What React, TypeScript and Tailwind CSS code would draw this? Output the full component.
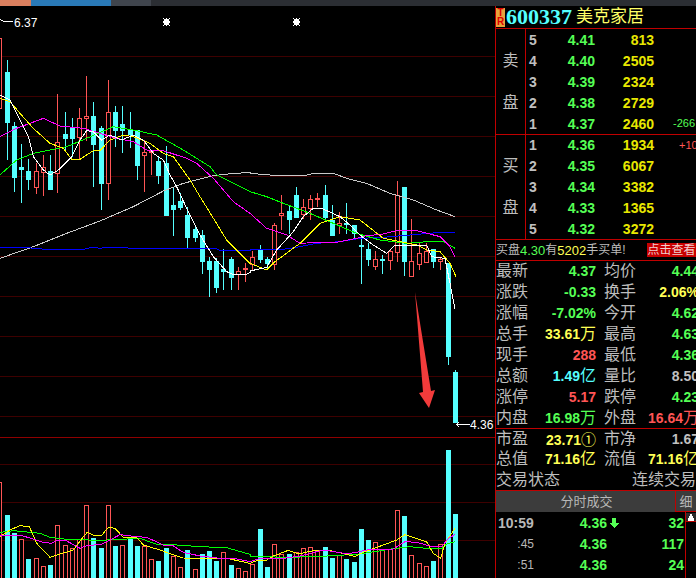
import type { ReactNode } from 'react';

const RED = '#ff5555';
const CYAN = '#55ffff';

// x, type (r 阳线 / c 阴线), body top, body bottom, wick top, wick bottom, volume top
type Bar = [number, 'r' | 'c', number, number, number, number, number, ('r' | 'c')?];

const bars: Bar[] = [
  [-1, 'r', 38, 108, 38, 108, 482],
  [7.5, 'c', 72, 123, 60, 160, 515],
  [14.5, 'c', 126, 178, 122, 192, 533],
  [21.5, 'c', 167, 170, 144, 203, 539, 'r'],
  [28.5, 'c', 171, 180, 159, 190, 559],
  [36, 'r', 171, 187, 163, 194, 558],
  [43.5, 'r', 167, 172, 155, 196, 566],
  [50.5, 'c', 171, 190, 155, 190, 565],
  [57.5, 'r', 142, 173, 94, 193, 525],
  [65, 'c', 134, 139, 112, 150, 545, 'r'],
  [72.5, 'c', 128, 139, 118, 157, 548, 'r'],
  [79.5, 'r', 118, 137, 108, 159, 539],
  [86.5, 'r', 116, 118, 76, 141, 505],
  [93.5, 'c', 116, 145, 102, 187, 538],
  [101.5, 'c', 128, 184, 126, 210, 548],
  [108.5, 'r', 112, 183, 80, 200, 505],
  [115.5, 'c', 112, 131, 106, 147, 546],
  [122.5, 'c', 124, 131, 106, 153, 545, 'r'],
  [130.5, 'c', 129, 135, 112, 148, 539],
  [137.5, 'c', 130, 166, 130, 180, 546],
  [144.5, 'r', 152, 155, 140, 192, 546],
  [151.5, 'r', 151, 151, 151, 175, 559],
  [158.5, 'c', 161, 176, 157, 184, 561],
  [166, 'c', 163, 216, 146, 216, 548],
  [173.5, 'c', 205, 210, 188, 236, 556, 'r'],
  [180.5, 'c', 201, 208, 193, 210, 567, 'r'],
  [187.5, 'c', 215, 238, 207, 248, 550],
  [195.5, 'c', 229, 238, 227, 242, 569, 'r'],
  [202.5, 'c', 235, 262, 230, 274, 554],
  [209.5, 'c', 261, 270, 257, 297, 551],
  [216.5, 'c', 261, 288, 258, 293, 561],
  [223.5, 'c', 269, 272, 249, 290, 552, 'r'],
  [231.5, 'c', 259, 278, 257, 290, 565],
  [238.5, 'r', 271, 274, 267, 290, 568],
  [245.5, 'r', 268, 268, 263, 282, 571],
  [252.5, 'r', 257, 264, 251, 270, 564],
  [260.5, 'c', 250, 260, 245, 263, 529],
  [267.5, 'c', 259, 264, 257, 270, 567],
  [274.5, 'r', 225, 264, 223, 270, 544],
  [281.5, 'r', 213, 215, 195, 230, 554],
  [289, 'c', 211, 220, 205, 234, 554],
  [296.5, 'c', 195, 218, 187, 218, 552, 'r'],
  [303.5, 'r', 207, 214, 199, 219, 548],
  [310.5, 'r', 199, 208, 195, 220, 547],
  [317.5, 'r', 198, 198, 193, 207, 550],
  [325.5, 'c', 195, 218, 185, 222, 547],
  [332.5, 'c', 220, 236, 205, 236, 558],
  [339.5, 'r', 223, 225, 212, 234, 555],
  [346.5, 'c', 223, 224, 203, 234, 559],
  [354.5, 'c', 225, 234, 225, 239, 562],
  [361.5, 'c', 245, 245, 235, 284, 529],
  [368.5, 'c', 249, 260, 243, 266, 540],
  [375.5, 'r', 259, 266, 251, 270, 542],
  [382.5, 'c', 259, 259, 255, 274, 549, 'r'],
  [390.5, 'r', 251, 260, 249, 270, 549],
  [397.5, 'r', 195, 252, 181, 262, 510],
  [404.5, 'c', 187, 262, 187, 276, 516],
  [411.5, 'r', 261, 276, 219, 276, 555],
  [419.5, 'r', 253, 264, 243, 270, 563],
  [426.5, 'r', 251, 262, 243, 262, 566],
  [433.5, 'c', 249, 262, 249, 268, 561],
  [440.5, 'r', 259, 261, 257, 270, 544],
  [448.5, 'c', 263, 357, 263, 365, 450],
  [455.5, 'c', 372, 423, 370, 423, 514],
];

// 折线点按截图放大 3 倍后的坐标记录，这里换算回页面坐标
function seg(ox: number, oy: number, pts: number[][]) {
  return pts.map(([x, y]) => `${ox + x / 3},${oy + y / 3}`).join(' ');
}

const priceLines: [string, string][] = [
  ['#c8c8c8', seg(0, 160, [[0, 295], [100, 260], [200, 220], [300, 183], [400, 140], [490, 93], [550, 70], [640, 47], [700, 40], [750, 38]]) + ' ' + seg(250, 160, [[0, 40], [60, 45], [170, 45], [190, 40], [250, 40], [290, 55], [350, 70], [420, 100], [490, 120], [560, 150], [615, 170]])],
  ['#0000ff', seg(0, 160, [[0, 262], [80, 262], [100, 265], [140, 268], [250, 268], [270, 263], [290, 263], [300, 265], [315, 262], [380, 262], [385, 265], [650, 266], [660, 271], [750, 271]]) + ' ' + seg(250, 160, [[0, 270], [100, 268], [150, 260], [200, 250], [270, 245], [330, 235], [400, 232], [480, 225], [560, 218], [615, 218]])],
  ['#00ff00', seg(0, 0, [[0, 525], [50, 480], [100, 460], [200, 440], [260, 415], [340, 380], [400, 390], [470, 405], [550, 450], [630, 500], [650, 525], [700, 550], [750, 575]]) + ' ' + seg(250, 160, [[0, 95], [50, 110], [100, 130], [180, 160], [250, 190], [320, 220], [390, 240], [470, 250], [530, 245], [580, 245], [615, 265]])],
  ['#ff00ff', seg(0, 0, [[0, 410], [50, 385], [130, 355], [180, 378], [250, 385], [300, 400], [350, 415], [400, 425], [440, 450], [490, 452], [560, 475], [590, 490], [640, 535], [700, 605], [750, 640]]) + ' ' + seg(250, 160, [[0, 160], [50, 205], [110, 225], [150, 250], [210, 247], [260, 247], [320, 235], [345, 228], [400, 222], [440, 212], [500, 212], [570, 230], [600, 260], [615, 290]])],
  ['#ffff00', seg(0, 0, [[0, 295], [30, 305], [60, 340], [100, 385], [150, 430], [190, 445], [215, 478], [240, 478], [280, 452], [300, 452], [330, 420], [370, 405], [400, 410], [450, 430], [490, 460], [520, 470], [570, 540], [600, 590], [625, 630]]) + ' ' + seg(0, 160, [[680, 240], [750, 310]]) + ' ' + seg(250, 160, [[0, 310], [50, 330], [75, 305], [150, 250], [210, 190], [270, 170], [330, 180], [400, 235], [450, 245], [500, 255], [530, 270], [570, 275], [600, 310], [618, 350]])],
  ['#ffffff', seg(0, 0, [[0, 285], [30, 300], [50, 340], [85, 410], [100, 470], [130, 510], [150, 525], [175, 510], [215, 470], [240, 420], [260, 392], [280, 395], [305, 420], [330, 405], [365, 420], [400, 405], [430, 420], [460, 460], [490, 480]]) + ' ' + seg(0, 160, [[510, 45], [530, 80], [560, 145], [600, 225], [640, 290], [680, 335], [700, 344], [735, 344], [750, 338]]) + ' ' + seg(250, 160, [[0, 333], [50, 322], [80, 270], [130, 215], [160, 170], [190, 145], [215, 145], [270, 170], [300, 195], [330, 225], [370, 255], [410, 280], [435, 255], [530, 255], [545, 290], [585, 295], [600, 370], [615, 448]])],
];

const volumeLines: [string, string][] = [
  ['#00ff00', seg(0, 430, [[0, 307], [40, 302], [120, 310], [150, 322], [200, 328], [300, 331], [420, 325], [470, 343], [530, 345], [600, 350], [680, 353], [750, 373]]) + ' ' + seg(250, 430, [[0, 378], [100, 382], [200, 380], [330, 372], [430, 356], [480, 350], [530, 355], [575, 356], [590, 342], [615, 335]])],
  ['#ffff00', seg(0, 430, [[0, 320], [30, 300], [60, 287], [88, 290], [110, 340], [150, 382], [180, 372], [220, 360], [250, 320], [262, 307], [280, 316], [305, 316], [325, 292], [345, 295], [370, 322], [410, 322], [430, 345], [480, 360], [530, 378], [550, 384], [600, 385], [680, 385], [750, 400]]) + ' ' + seg(250, 430, [[20, 392], [50, 390], [70, 378], [115, 361], [145, 372], [190, 362], [240, 362], [290, 373], [315, 380], [345, 365], [400, 345], [440, 330], [465, 314], [530, 336], [550, 370], [572, 385], [585, 340], [615, 295]])],
  ['#ff00ff', seg(0, 430, [[0, 315], [70, 318], [130, 337], [155, 340], [175, 330], [195, 330], [240, 355], [260, 347], [305, 343], [360, 314], [410, 320], [440, 322], [490, 345], [520, 348], [550, 367], [600, 378], [660, 385], [700, 385], [750, 395]]) + ' ' + seg(250, 430, [[30, 385], [100, 385], [150, 378], [220, 360], [290, 371], [320, 367], [350, 360], [430, 357], [465, 335], [500, 337], [540, 348], [575, 350], [595, 325], [615, 314]])],
];

const gridLines = [56, 96, 136, 176, 216, 256, 296, 336, 376, 416, 464, 502, 540];

function Star({ x }: { x: number }) {
  return (
    <g fill="#ffffff">
      <rect x={x - 2} y={19} width={5} height={6} />
      <rect x={x - 3} y={18} width={1} height={1} />
      <rect x={x + 3} y={18} width={1} height={1} />
      <rect x={x - 3} y={25} width={1} height={1} />
      <rect x={x + 3} y={25} width={1} height={1} />
      <rect x={x} y={18} width={1} height={8} />
      <rect x={x - 3} y={21} width={7} height={2} />
    </g>
  );
}

function Chart() {
  return (
    <svg width={495} height={572} viewBox="0 6 495 572" className="block shrink-0" shapeRendering="crispEdges">
      {gridLines.map((y) => (
        <line key={y} x1={0} x2={495} y1={y + 0.5} y2={y + 0.5} stroke="#3e0000" />
      ))}
      <line x1={0} x2={495} y1={437.5} y2={437.5} stroke="#8f0000" />
      <Star x={166} />
      <Star x={296} />

      {/* K线 */}
      {bars.map(([rawX, type, top, bottom, wickTop, wickBottom], i) => {
        const x = Math.floor(rawX) + 0.5;
        const color = type === 'r' ? RED : CYAN;
        return (
          <g key={i}>
            <line x1={x} x2={x} y1={wickTop} y2={wickBottom} stroke={color} />
            {type === 'r' ? (
              <rect x={x - 2} y={top + 0.5} width={4} height={Math.max(bottom - top, 1)} fill="#000000" stroke={color} />
            ) : (
              <rect x={x - 2.5} y={top} width={5} height={Math.max(bottom - top, 2)} fill={color} />
            )}
          </g>
        );
      })}

      {priceLines.map(([color, points]) => (
        <polyline key={color} points={points} fill="none" stroke={color} strokeWidth={1} />
      ))}

      <polygon points="415,292 423,392 419,393 429,408 435,390 431,391" fill="#f23b3b" shapeRendering="auto" />

      {/* 最高最低价标注 */}
      <path d="M0 19.5h1M1 20.5h2M3 21.5h10" stroke="#ffffff" fill="none" />
      <text x={14} y={27} fill="#ffffff" fontSize={12} fontFamily="'Liberation Sans', sans-serif">6.37</text>
      <path d="M456 424.5h14M457 423.5h1M457 425.5h1M458 422.5h1M458 426.5h1" stroke="#ffffff" fill="none" />
      <text x={470} y={429} fill="#ffffff" fontSize={12} fontFamily="'Liberation Sans', sans-serif">4.36</text>

      {/* 成交量 */}
      {bars.map(([rawX, type, , , , , volTop, volType], i) => {
        const x = Math.floor(rawX) + 0.5;
        return (volType ?? type) === 'r' ? (
          <rect key={i} x={x - 2} y={volTop + 0.5} width={4} height={578 - volTop} fill="#000000" stroke={RED} />
        ) : (
          <rect key={i} x={x - 2.5} y={volTop} width={5} height={578 - volTop} fill={CYAN} />
        );
      })}
      {volumeLines.map(([color, points]) => (
        <polyline key={color} points={points} fill="none" stroke={color} strokeWidth={1} />
      ))}
    </svg>
  );
}

function QuoteRows({ rows }: { rows: [string, string, string, ReactNode?][] }) {
  return (
    <div className="flex-1 flex flex-col">
      {rows.map(([no, price, vol, extra]) => (
        <div key={no} className="flex-1 flex items-center font-bold text-[14px] whitespace-nowrap">
          <span className="w-[14px] pl-[3px] text-[#c0c0c0]">{no}</span>
          <span className="w-[55px] text-right text-[#55ff55]">{price}</span>
          <span className="w-[59px] text-right text-[#e8e800]">{vol}</span>
          {extra}
        </div>
      ))}
    </div>
  );
}

function SideLabel({ text }: { text: string }) {
  return (
    <div className="w-[30px] shrink-0 border-r border-[#c00000] flex flex-col items-center justify-center gap-[26px] text-[16px] leading-none text-[#bdbdbd]">
      <span>{text}</span>
      <span>盘</span>
    </div>
  );
}

function Stat({ label, value, color, label2, value2, color2 }: { label: string; value: ReactNode; color: string; label2: string; value2: ReactNode; color2: string }) {
  return (
    <div className="flex-1 flex items-center whitespace-nowrap">
      <span className="w-[32px] shrink-0 text-[16px] text-[#bdbdbd]">{label}</span>
      <span className={`w-[68px] shrink-0 text-right text-[14px] font-bold ${color}`}>{value}</span>
      <span className="w-[32px] ml-[8px] shrink-0 text-[16px] text-[#bdbdbd]">{label2}</span>
      <span className={`w-[63px] shrink-0 text-right text-[14px] font-bold ${color2}`}>{value2}</span>
    </div>
  );
}

const Wan = () => <span className="font-normal text-[16px]">万</span>;
const Yi = () => <span className="font-normal text-[16px]">亿</span>;

function Panel() {
  return (
    <div className="w-[201px] h-[572px] shrink-0 border-l border-[#c00000] overflow-hidden flex flex-col leading-none">
      {/* 标题 */}
      <div className="h-[23px] shrink-0 border-b border-[#c00000] flex items-center">
        <div className="w-[9px] h-[19px] bg-[#e8a33c] flex flex-col items-center justify-center text-[#e00000] text-[10px] leading-[9px] font-bold">
          <span>T</span>
          <span>R</span>
        </div>
        <span className="ml-[1px] font-['Liberation_Serif',serif] font-bold text-[22px] leading-[20px] text-[#55ffff]">600337</span>
        <span className="ml-[4px] text-[17px] leading-[20px] text-[#ffff66]">美克家居</span>
      </div>

      {/* 卖盘 */}
      <div className="h-[106px] shrink-0 border-b border-[#c00000] flex">
        <SideLabel text="卖" />
        <QuoteRows
          rows={[
            ['5', '4.41', '813'],
            ['4', '4.40', '2505'],
            ['3', '4.39', '2324'],
            ['2', '4.38', '2729'],
            ['1', '4.37', '2460', <span className="ml-[19px] text-[11px] font-normal text-[#55ff55]">-266</span>],
          ]}
        />
      </div>

      {/* 买盘 */}
      <div className="h-[105px] shrink-0 border-b border-[#c00000] flex">
        <SideLabel text="买" />
        <QuoteRows
          rows={[
            ['1', '4.36', '1934', <span className="ml-[25px] text-[11px] font-normal text-[#ff5555]">+10</span>],
            ['2', '4.35', '6067'],
            ['3', '4.34', '3382'],
            ['4', '4.33', '1365'],
            ['5', '4.32', '3272'],
          ]}
        />
      </div>

      {/* 大单提示 */}
      <div className="h-[21px] shrink-0 border-b border-[#c00000] flex items-center text-[12px] text-[#bdbdbd] whitespace-nowrap">
        <span>买盘</span>
        <span className="text-[13px] text-[#55ff55]">4.30</span>
        <span>有</span>
        <span className="text-[13px] text-[#ffff55]">5202</span>
        <span>手买单!</span>
        <span className="ml-auto w-[49px] h-[14px] bg-[#c80000] text-[#f0d0d0] flex items-center justify-center">点击查看</span>
      </div>

      {/* 行情 */}
      <div className="h-[168px] shrink-0 border-b border-[#c00000] flex flex-col">
        <Stat label="最新" value="4.37" color="text-[#55ff55]" label2="均价" value2="4.44" color2="text-[#55ff55]" />
        <Stat label="涨跌" value="-0.33" color="text-[#55ff55]" label2="换手" value2="2.06%" color2="text-[#ffff55]" />
        <Stat label="涨幅" value="-7.02%" color="text-[#55ff55]" label2="今开" value2="4.62" color2="text-[#55ff55]" />
        <Stat label="总手" value={<>33.61<Wan /></>} color="text-[#ffff55]" label2="最高" value2="4.63" color2="text-[#55ff55]" />
        <Stat label="现手" value="288" color="text-[#ff5555]" label2="最低" value2="4.36" color2="text-[#55ff55]" />
        <Stat label="总额" value={<>1.49<Yi /></>} color="text-[#55ffff]" label2="量比" value2="8.50" color2="text-[#c0c0c0]" />
        <Stat label="涨停" value="5.17" color="text-[#ff5555]" label2="跌停" value2="4.23" color2="text-[#55ff55]" />
        <Stat label="内盘" value={<>16.98<Wan /></>} color="text-[#55ff55]" label2="外盘" value2={<>16.64<Wan /></>} color2="text-[#ff5555]" />
      </div>

      <div className="h-[62px] shrink-0 border-b border-[#c00000] flex flex-col">
        <Stat label="市盈" value={<>23.71<span className="font-normal text-[15px]">①</span></>} color="text-[#ffff55]" label2="市净" value2="1.67" color2="text-[#c0c0c0]" />
        <Stat label="总值" value={<>71.16<Yi /></>} color="text-[#ffff55]" label2="流值" value2={<>71.16<Yi /></>} color2="text-[#ffff55]" />
        <div className="flex-1 flex items-center justify-between text-[16px] text-[#bdbdbd]">
          <span>交易状态</span>
          <span>连续交易</span>
        </div>
      </div>

      {/* 分时成交 */}
      <div className="h-[21px] shrink-0 bg-[#3c3c3c] flex items-center text-[13px] text-[#b8b8b8]">
        <span className="flex-1 text-center pl-[2px]">分时成交</span>
        <span className="w-[21px] h-full border-l border-b border-[#c00000] flex items-center justify-center">细</span>
      </div>
      <div className="flex-1 flex">
        <div className="w-[189px] shrink-0 flex flex-col">
          {[
            ['10:59', '4.36', '32'],
            [':45', '4.36', '117'],
            [':51', '4.36', '24'],
          ].map(([time, price, vol], i) => (
            <div key={time} className="h-[21px] flex items-center font-bold text-[14px] whitespace-nowrap">
              {i === 0 ? (
                <span className="w-[40px] pl-[2px] text-[#b8b8b8]">{time}</span>
              ) : (
                <span className="w-[40px] text-right pr-[2px] text-[12px] font-normal text-[#b8b8b8]">{time}</span>
              )}
              <span className="w-[71px] text-right text-[#55ff55]">{price}</span>
              <span className="w-[12px] flex justify-center ml-[1px]">
                {i === 0 && (
                  <svg width={10} height={10} viewBox="0 0 10 10" shapeRendering="crispEdges">
                    <path d="M3 0h4v5h3L5 10 0 5h3z" fill="#55ff55" />
                  </svg>
                )}
              </span>
              <span className="w-[64px] text-right text-[#55ff55]">{vol}</span>
            </div>
          ))}
        </div>
        <div className="flex-1 border-l border-[#c00000] pt-[1px]">
          <svg width={10} height={9} viewBox="0 0 10 9" shapeRendering="crispEdges" className="block">
            <rect width={10} height={8} fill="#2a2a2a" />
            <rect y={8} width={10} height={1} fill="#c00000" />
            <path d="M4 1h2v2h1v2h1v3H2V5h1V3h1z" fill="#ffffff" />
          </svg>
        </div>
      </div>
    </div>
  );
}

export default function App() {
  return (
    <div className="w-[696px] h-[578px] bg-black overflow-hidden flex flex-col font-['Liberation_Sans','Noto_Sans_CJK_SC',sans-serif]">
      {/* 顶部标签条 */}
      <div className="h-[6px] shrink-0 flex">
        <div className="w-[31px] bg-[#d97f5e]"></div>
        <div className="w-[80px] bg-[#2a7ab8]"></div>
        <div className="w-[40px] bg-[#40454d]"></div>
        <div className="flex-1 bg-[#2b2e33]"></div>
      </div>
      <div className="flex">
        <Chart />
        <Panel />
      </div>
    </div>
  );
}
